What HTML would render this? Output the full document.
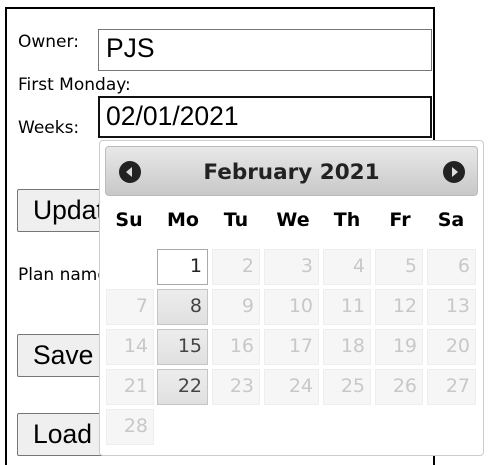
<!DOCTYPE html>
<html style="height:465px;overflow:hidden"><head><style>
body{margin:0;width:492px;height:465px;background:#fff;position:relative;overflow:hidden;font-family:"DejaVu Sans","Liberation Sans",sans-serif;}
.a{position:absolute}
.lbl{font-size:17px;color:#000}
.inp{position:absolute;box-sizing:border-box;background:#fff;font-family:"Liberation Sans",sans-serif;font-size:26.5px;padding-left:7px;line-height:36px}
.btn{position:absolute;box-sizing:border-box;background:#efefef;border:1px solid #767676;border-radius:2px;font-family:"Liberation Sans",sans-serif;font-size:26.5px;padding-left:15px;line-height:40px;left:17px;width:120px}
.dh{position:absolute;top:209px;font-weight:bold;font-size:19px;font-family:"DejaVu Sans",sans-serif;transform:translateX(-50%)}
.c{position:absolute;box-sizing:border-box;background:#f6f6f6;border:1px solid #eee;color:#c8c8c8;font-size:19px;text-align:right;padding-right:5px;line-height:33px}
.c.s{background:linear-gradient(#ededed,#e0e0e0);border:1px solid #c5c5c5;color:#444}
.c.t{background:#fff;border:1px solid #aaa;color:#222}
</style></head><body>
<div class="a" style="left:5px;top:7px;width:426px;height:456px;border:2px solid #000;border-bottom:none;box-sizing:content-box"></div>
<div class="a lbl" style="left:18px;top:32px">Owner:</div>
<div class="inp" style="left:98px;top:29px;width:334px;height:42px;border:1px solid #767676">PJS</div>
<div class="a lbl" style="left:18px;top:75px">First Monday:</div>
<div class="inp" style="left:98px;top:96px;width:334px;height:42px;border:2px solid #111;padding-left:6px">02/01/2021</div>
<div class="a lbl" style="left:18px;top:118px">Weeks:</div>
<div class="btn" style="top:189px;height:43px">Update</div>
<div class="a lbl" style="left:18px;top:265px">Plan name:</div>
<div class="btn" style="top:334px;height:43px">Save</div>
<div class="btn" style="top:413px;height:43px">Load</div>

<div class="a" style="left:99px;top:140px;width:385px;height:316px;box-sizing:border-box;background:#fff;border:1px solid #ccc;border-radius:4px"></div>
<div class="a" style="left:105px;top:146px;width:373px;height:50px;box-sizing:border-box;border:1px solid #bbb;border-radius:4px;background:linear-gradient(#e8e8e8,#c8c8c8)"></div>
<svg class="a" style="left:118px;top:160px" width="24" height="24"><circle cx="12" cy="12" r="11" fill="#222"/><path d="M14 7 L8 12 L14 17Z" fill="#ddd"/></svg>
<svg class="a" style="left:442px;top:160px" width="24" height="24"><circle cx="12" cy="12" r="11" fill="#222"/><path d="M10 7 L16 12 L10 17Z" fill="#ddd"/></svg>
<div class="a" style="left:105px;width:373px;top:160px;text-align:center;font-weight:bold;font-size:21.5px;color:#222">February 2021</div>
<div class="dh" style="left:129px">Su</div><div class="dh" style="left:183px">Mo</div><div class="dh" style="left:236px">Tu</div><div class="dh" style="left:293px">We</div><div class="dh" style="left:347px">Th</div><div class="dh" style="left:400px">Fr</div><div class="dh" style="left:451px">Sa</div>
<div id="g"></div>
<script>
var xs=[[106,48],[157,51],[212,48],[264,55],[323,48],[375,48],[427,49]],ys=[249,289,329,369,409],h='';
for(var d=1;d<=28;d++){var i=d,col=i%7,row=Math.floor(i/7);var cls='c';if(d==1)cls+=' t';else if(col==1)cls+=' s';
h+='<div class="'+cls+'" style="left:'+xs[col][0]+'px;top:'+ys[row]+'px;width:'+xs[col][1]+'px;height:36px">'+d+'</div>';}
document.getElementById('g').innerHTML=h;
</script>
</body></html>
